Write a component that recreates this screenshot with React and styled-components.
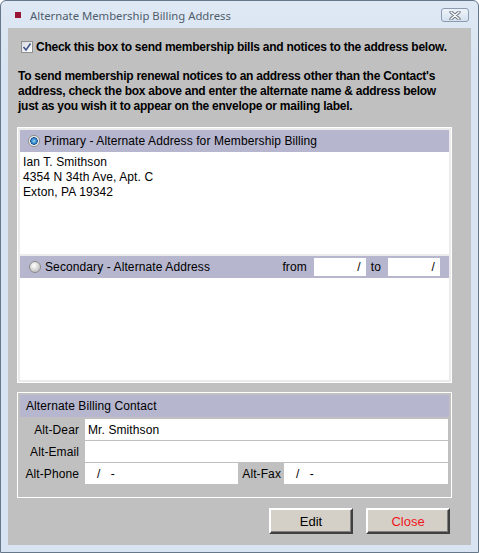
import React from "react";
import styled, { createGlobalStyle } from "styled-components";

const GlobalStyle = createGlobalStyle`
  html, body {
    margin: 0;
    padding: 0;
    background: #ffffff;
  }
  * {
    box-sizing: border-box;
  }
`;

const Window = styled.div`
  width: 479px;
  height: 553px;
  display: flex;
  flex-direction: column;
  border: 1px solid #66778a;
  border-radius: 6px 6px 0 0;
  background: linear-gradient(#dfe9f5, #d9e4f2 60px, #d9e4f2);
  padding: 0 7px 7px 7px;
  font-family: "Liberation Sans", Arial, sans-serif;
  font-size: 12px;
  letter-spacing: 0.1px;
  color: #000;
`;

const TitleBar = styled.div`
  height: 27px;
  display: flex;
  align-items: center;
  padding-top: 1px;
  letter-spacing: 0;
`;

const TitleIcon = styled.span`
  width: 6px;
  height: 6px;
  margin-left: 7px;
  background: #9a1436;
`;

const TitleText = styled.span`
  margin-left: 9px;
  font-family: "Noto Sans", "Open Sans", sans-serif;
  font-size: 11.3px;
  color: #4f5d6c;
`;

const CloseBox = styled.div`
  margin-left: auto;
  margin-right: 2px;
  width: 28px;
  height: 14px;
  border: 1px solid #8b9bb0;
  border-radius: 3px;
  background: linear-gradient(#eef3f9, #d5e0ee);
  display: flex;
  align-items: center;
  justify-content: center;
`;

const Client = styled.div`
  flex: 1;
  background: #c0c0c0;
  display: flex;
  flex-direction: column;
  padding: 0 19px 0 9px;
`;

const CheckRow = styled.label`
  display: flex;
  align-items: center;
  margin: 13px 0 0 4px;
  height: 12px;
  font-weight: bold;
  letter-spacing: -0.25px;
  white-space: nowrap;
`;

const CheckBox = styled.span`
  width: 12px;
  height: 12px;
  border: 1px solid #8e8f8f;
  background: linear-gradient(135deg, #d8dbe0, #ffffff);
  display: flex;
  align-items: center;
  justify-content: center;
  margin-right: 3px;
`;

const Intro = styled.p`
  margin: 16px 0 0 1px;
  font-weight: bold;
  line-height: 15px;
  letter-spacing: -0.25px;
  white-space: nowrap;
`;

const Panel = styled.div`
  border: 1px solid #ffffff;
  padding: 2px;
  background: ${(p) => (p.$filled ? "#ebebeb" : "transparent")};
  display: flex;
  flex-direction: column;
  gap: ${(p) => (p.$filled ? "2px" : "0")};
  margin-top: ${(p) => p.$top}px;
`;

const Section = styled.div`
  display: flex;
  flex-direction: column;
`;

const Header = styled.div`
  height: 22px;
  background: #b6b6ce;
  display: flex;
  align-items: center;
  padding: 0 9px 0 ${(p) => p.$indent}px;
`;

const Radio = styled.span`
  width: 12px;
  height: 12px;
  border-radius: 50%;
  border: 1px solid #8a8a8a;
  background: ${(p) =>
    p.$on
      ? "radial-gradient(circle at 50% 50%, #9fd4f7 0, #2d86c9 2.5px, #154f8a 3.5px, #e9e9e9 4px, #ffffff 5px)"
      : "radial-gradient(circle at 40% 35%, #ffffff 0, #e4e4e4 3px, #c8c8c8 6px)"};
  margin-right: 4px;
  flex-shrink: 0;
`;

const Body = styled.div`
  height: 102px;
  background: #ffffff;
  padding: 3px 0 0 3px;
  line-height: 15px;
`;

const DateLabel = styled.span`
  margin: ${(p) => (p.$first ? "0 7px 0 auto" : "0 7px 0 5px")};
`;

const DateField = styled.span`
  width: 52px;
  height: 18px;
  background: #ffffff;
  display: flex;
  align-items: center;
  justify-content: flex-end;
  padding-right: 5px;
`;

const Rows = styled.div`
  display: flex;
  flex-direction: column;
  gap: 1px;
  padding: 2px 1px 11px 0;
`;

const Row = styled.div`
  display: grid;
  grid-template-columns: ${(p) => p.$cols};
  height: 21px;
`;

const Label = styled.span`
  display: flex;
  align-items: center;
  justify-content: flex-end;
  padding-right: ${(p) => p.$pad}px;
`;

const Field = styled.span`
  background: #ffffff;
  display: flex;
  align-items: center;
  padding-left: ${(p) => p.$pad || 3}px;
  white-space: pre;
`;

const ButtonBar = styled.div`
  display: flex;
  justify-content: flex-end;
  gap: 13px;
  margin: 10px 2px 0 0;
`;

const Button = styled.button`
  width: 84px;
  height: 26px;
  background: #d4d0c8;
  border: 2px solid;
  border-color: #ffffff #404040 #404040 #ffffff;
  box-shadow: inset -1px -1px 0 #808080;
  font-family: "Liberation Sans", Arial, sans-serif;
  font-size: 13px;
  color: ${(p) => p.$color || "#000"};
  padding: 0;
`;

export default function App() {
  return (
    <>
      <GlobalStyle />
      <Window>
        <TitleBar>
          <TitleIcon />
          <TitleText>Alternate Membership Billing Address</TitleText>
          <CloseBox>
            <svg width="12" height="9" viewBox="0 0 12 9">
              <path d="M2 1 L10 8 M10 1 L2 8" stroke="#6b7380" strokeWidth="3.2" strokeLinecap="round" />
              <path d="M2 1 L10 8 M10 1 L2 8" stroke="#ffffff" strokeWidth="1.4" strokeLinecap="round" />
            </svg>
          </CloseBox>
        </TitleBar>
        <Client>
          <CheckRow>
            <CheckBox>
              <svg width="10" height="10" viewBox="0 0 10 10">
                <path d="M1.5 5 L4 8 L8.5 1.5" fill="none" stroke="#40568a" strokeWidth="1.6" />
              </svg>
            </CheckBox>
            Check this box to send membership bills and notices to the address below.
          </CheckRow>
          <Intro>
            To send membership renewal notices to an address other than the Contact's
            <br />
            address, check the box above and enter the alternate name &amp; address below
            <br />
            just as you wish it to appear on the envelope or mailing label.
          </Intro>
          <Panel $filled $top={13}>
            <Section>
              <Header $indent={8}>
                <Radio $on />
                Primary - Alternate Address for Membership Billing
              </Header>
              <Body>
                Ian T. Smithson
                <br />
                4354 N 34th Ave, Apt. C
                <br />
                Exton, PA 19342
              </Body>
            </Section>
            <Section>
              <Header $indent={9}>
                <Radio />
                Secondary - Alternate Address
                <DateLabel $first>from</DateLabel>
                <DateField>/</DateField>
                <DateLabel>to</DateLabel>
                <DateField>/</DateField>
              </Header>
              <Body />
            </Section>
          </Panel>
          <Panel $top={9}>
            <Header $indent={6}>Alternate Billing Contact</Header>
            <Rows>
              <Row $cols="65px 1fr">
                <Label $pad={6}>Alt-Dear</Label>
                <Field>Mr. Smithson</Field>
              </Row>
              <Row $cols="65px 1fr">
                <Label $pad={6}>Alt-Email</Label>
                <Field />
              </Row>
              <Row $cols="65px 153px 46px 1fr">
                <Label $pad={6}>Alt-Phone</Label>
                <Field $pad={12}>/   -</Field>
                <Label $pad={3}>Alt-Fax</Label>
                <Field $pad={12}>/   -</Field>
              </Row>
            </Rows>
          </Panel>
          <ButtonBar>
            <Button>Edit</Button>
            <Button $color="#f0141e">Close</Button>
          </ButtonBar>
        </Client>
      </Window>
    </>
  );
}
